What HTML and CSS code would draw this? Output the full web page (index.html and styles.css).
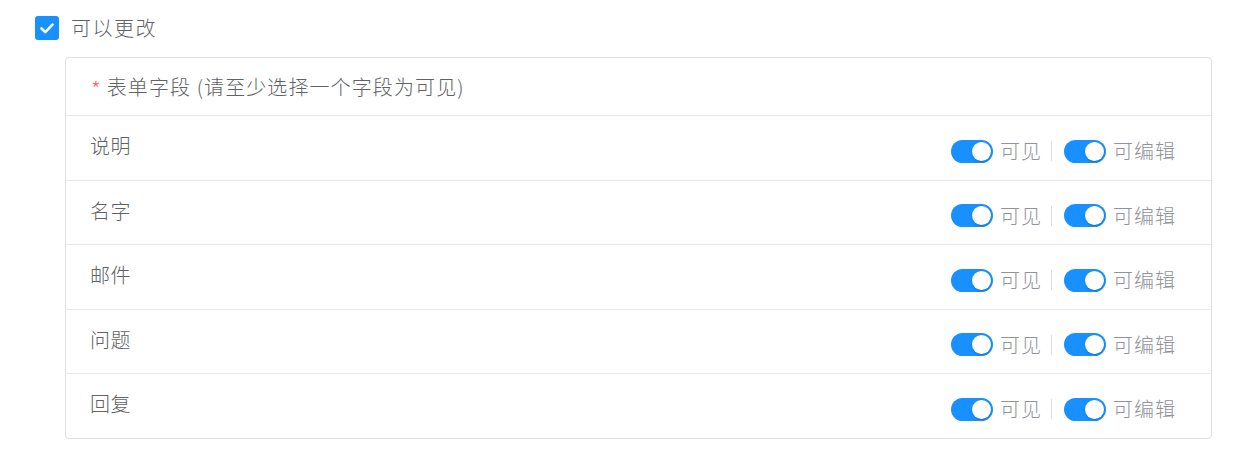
FILE: index.html
```html
<!DOCTYPE html>
<html lang="zh">
<head>
<meta charset="utf-8">
<link rel="stylesheet" href="styles.css">
</head>
<body>
<div class="page">
  <label class="check">
    <span class="check-box"><svg viewBox="0 0 24 24" width="24" height="24"><path d="M6.5 12.5l3.8 3.6 7.2-7.4" fill="none" stroke="#fff" stroke-width="2.6" stroke-linecap="round" stroke-linejoin="round"/></svg></span>
    <span class="check-text">可以更改</span>
  </label>
  <div class="card">
    <div class="card-head"><span class="req">*</span>表单字段 (请至少选择一个字段为可见)</div>
    <div class="row">
      <div class="label">说明</div>
      <div class="ops">
        <span class="switch"><span class="knob"></span></span><span class="op-text">可见</span>
        <span class="sep"></span>
        <span class="switch"><span class="knob"></span></span><span class="op-text">可编辑</span>
      </div>
    </div>
    <div class="row">
      <div class="label">名字</div>
      <div class="ops">
        <span class="switch"><span class="knob"></span></span><span class="op-text">可见</span>
        <span class="sep"></span>
        <span class="switch"><span class="knob"></span></span><span class="op-text">可编辑</span>
      </div>
    </div>
    <div class="row">
      <div class="label">邮件</div>
      <div class="ops">
        <span class="switch"><span class="knob"></span></span><span class="op-text">可见</span>
        <span class="sep"></span>
        <span class="switch"><span class="knob"></span></span><span class="op-text">可编辑</span>
      </div>
    </div>
    <div class="row">
      <div class="label">问题</div>
      <div class="ops">
        <span class="switch"><span class="knob"></span></span><span class="op-text">可见</span>
        <span class="sep"></span>
        <span class="switch"><span class="knob"></span></span><span class="op-text">可编辑</span>
      </div>
    </div>
    <div class="row">
      <div class="label">回复</div>
      <div class="ops">
        <span class="switch"><span class="knob"></span></span><span class="op-text">可见</span>
        <span class="sep"></span>
        <span class="switch"><span class="knob"></span></span><span class="op-text">可编辑</span>
      </div>
    </div>
  </div>
</div>
</body>
</html>
```

FILE: styles.css
```css
html, body {
  margin: 0;
  padding: 0;
  background: #fff;
}
body {
  font-family: "Noto Sans CJK SC", "Noto Sans", sans-serif;
  font-weight: 300;
  color: #606266;
}
.page {
  padding: 16px 0 0 35px;
  width: 1177px;
}
.check {
  display: flex;
  align-items: center;
  height: 24px;
}
.check-box {
  width: 24px;
  height: 24px;
  border-radius: 3px;
  background: #1890ff;
  display: flex;
}
.check-text {
  margin-left: 12px;
  font-size: 20px;
  line-height: 24px;
  letter-spacing: 1.5px;
  color: #606266;
}
.card {
  margin: 17px 0 0 30px;
  border: 1px solid #dcdfe6;
  border-radius: 4px;
}
.card-head {
  height: 57px;
  display: flex;
  align-items: center;
  padding-left: 25px;
  font-size: 20px;
  letter-spacing: 1.1px;
  color: #606266;
  border-bottom: 1px solid #e4e7ed;
}
.req {
  color: #f56c6c;
  margin-right: 6px;
  font-size: 22px;
  letter-spacing: 0;
  position: relative;
  top: 1px;
}
.row {
  height: 63.5px;
  display: flex;
  justify-content: space-between;
  align-items: flex-start;
  padding: 0 35px 0 24px;
  border-bottom: 1px solid #e4e7ed;
}
.row:last-child {
  border-bottom: none;
}
.label {
  margin-top: 18px;
  font-size: 20px;
  line-height: 24px;
  letter-spacing: 0.5px;
  color: #606266;
}
.ops {
  margin-top: 23px;
  display: flex;
  align-items: center;
  height: 24px;
}
.switch {
  width: 42px;
  height: 23px;
  border-radius: 12px;
  background: #1890ff;
  display: flex;
  align-items: center;
  justify-content: flex-end;
  padding-right: 2px;
  box-sizing: border-box;
}
.knob {
  width: 19px;
  height: 19px;
  border-radius: 50%;
  background: #fff;
  box-shadow: 0 1px 2px rgba(0, 0, 0, 0.2);
}
.op-text {
  margin-left: 7px;
  font-size: 20px;
  line-height: 24px;
  letter-spacing: 1px;
  color: #909399;
}
.sep {
  width: 1px;
  height: 20px;
  background: #dcdfe6;
  margin: 0 12px 0 9px;
}
```
